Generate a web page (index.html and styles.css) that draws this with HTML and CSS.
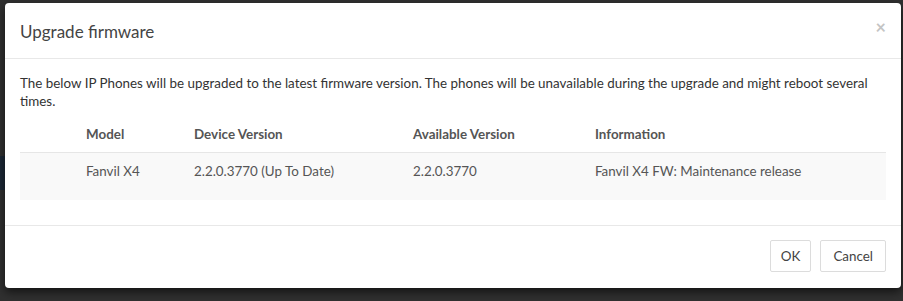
FILE: index.html
```html
<!DOCTYPE html>
<html>
<head>
<meta charset="utf-8">
<link rel="stylesheet" href="styles.css">
</head>
<body>
<div class="backdrop-bar"></div>
<div class="modal">
  <div class="modal-header">
    <h4 class="modal-title">Upgrade firmware</h4>
    <button class="close" type="button">&times;</button>
  </div>
  <div class="modal-body">
    <p class="intro">The below IP Phones will be upgraded to the latest firmware version. The phones will be unavailable during the upgrade and might reboot several times.</p>
    <table class="fw-table">
      <colgroup>
        <col class="c0"><col class="c1"><col class="c2"><col class="c3"><col class="c4">
      </colgroup>
      <thead>
        <tr><th></th><th>Model</th><th>Device Version</th><th>Available Version</th><th>Information</th></tr>
      </thead>
      <tbody>
        <tr><td></td><td>Fanvil X4</td><td>2.2.0.3770 (Up To Date)</td><td>2.2.0.3770</td><td>Fanvil X4 FW: Maintenance release</td></tr>
      </tbody>
    </table>
  </div>
  <div class="modal-footer">
    <button class="btn btn-ok" type="button">OK</button>
    <button class="btn" type="button">Cancel</button>
  </div>
</div>
</body>
</html>
```
FILE: styles.css
```css
html,body{margin:0;padding:0;}
body{
  background:#303030;
  height:301px;
  overflow:hidden;
  font-family:Lato,"Noto Sans",sans-serif;
  font-size:13.4px;
  color:#333;
  position:relative;
}
.backdrop-bar{
  position:absolute;
  left:0;top:156px;
  width:8px;height:34px;
  background:#1c2836;
}
.modal{
  position:relative;
  margin:3px 0 0 5px;
  width:896px;
  background:#fff;
  border-radius:4px;
  box-shadow:0 4px 10px rgba(0,0,0,.6);
}
.modal-header{
  display:flex;
  align-items:center;
  justify-content:space-between;
  height:55px;
  padding:0 15px;
  border-bottom:1px solid #e8e8e8;
  box-sizing:content-box;
}
.modal-title{
  margin:1px 0 0 0;
  font-size:17px;
  font-weight:normal;
  color:#444;
  line-height:25px;
}
.close{
  border:0;
  background:none;
  padding:0;
  margin:-8px 0 0 0;
  font-family:Lato,sans-serif;
  font-size:18px;
  font-weight:bold;
  line-height:18px;
  color:#c4c4c4;
  cursor:pointer;
}
.modal-body{
  padding:15px 15px 15px 15px;
}
.intro{
  margin:0 0 6px 0;
  line-height:18px;
  color:#333;
}
.fw-table{
  width:866px;
  border-collapse:collapse;
  table-layout:fixed;
  margin-bottom:10px;
}
.c0{width:58px}
.c1{width:108px}
.c2{width:219px}
.c3{width:182px}
.c4{width:299px}
.fw-table th{
  text-align:left;
  font-weight:bold;
  color:#555;
  padding:8px 8px;
  line-height:20px;
  border-bottom:1px solid #e6e6e6;
}
.fw-table td{
  color:#555;
  padding:8px 8px 19px 8px;
  line-height:20px;
  vertical-align:top;
  background:#f9f9f9;
}
.modal-footer{
  display:flex;
  justify-content:flex-end;
  gap:9px;
  padding:14px 15px 16px;
  border-top:1px solid #e8e8e8;
}
.btn{
  font-family:Lato,"Noto Sans",sans-serif;
  font-size:13.4px;
  color:#444;
  background:#fff;
  border:1px solid #dcdcdc;
  border-radius:2px;
  height:32px;
  padding:0 12px;
  line-height:30px;
  cursor:pointer;
}
.btn-ok{
  padding:0 10px;
}
```
